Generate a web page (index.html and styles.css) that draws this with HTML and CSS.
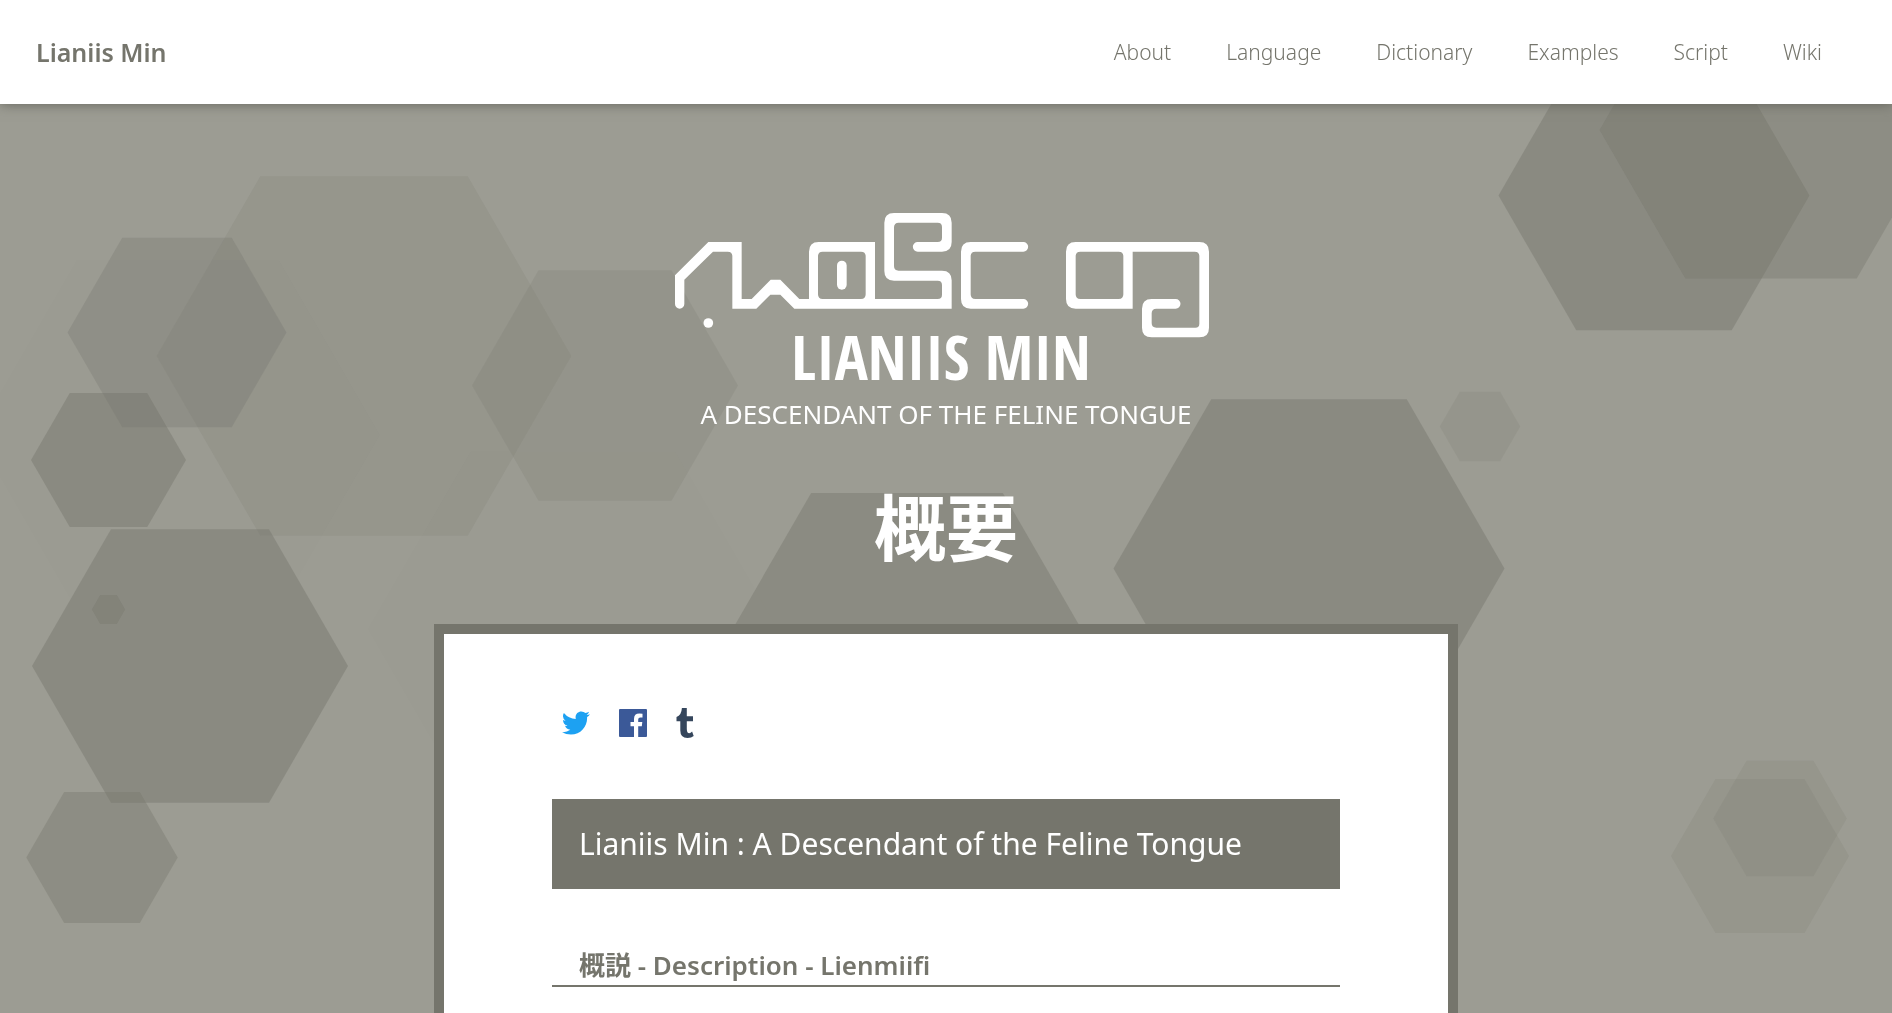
FILE: index.html
```html
<!DOCTYPE html>
<html lang="ja">
<head>
<meta charset="utf-8">
<meta name="viewport" content="width=device-width, initial-scale=1">
<title>Lianiis Min</title>
<link rel="stylesheet" href="styles.css">
</head>
<body>
<svg class="backdrop" viewBox="0 0 1892 1013" preserveAspectRatio="xMidYMin slice" aria-hidden="true">
  <defs><path id="hex" d="M-100 0L-50 -86.6H50L100 0L50 86.6H-50Z"/></defs>
  <use href="#hex" transform="translate(178 435) scale(2.02)" opacity=".015"/>
  <use href="#hex" transform="translate(573 629) scale(2.05)" opacity=".015"/>
  <use href="#hex" transform="translate(364 356) scale(2.075)" opacity=".16"/>
  <use href="#hex" transform="translate(605 385.5) scale(1.33)" opacity=".18"/>
  <use href="#hex" transform="translate(177 332.5) scale(1.095)" opacity=".3"/>
  <use href="#hex" transform="translate(108.5 460) scale(.775)" opacity=".44"/>
  <use href="#hex" transform="translate(190 666) scale(1.58)" opacity=".46"/>
  <use href="#hex" transform="translate(108.5 609.5) scale(.167)" opacity=".38"/>
  <use href="#hex" transform="translate(102 857.5) scale(.757)" opacity=".38"/>
  <use href="#hex" transform="translate(907 659) scale(1.917)" opacity=".42"/>
  <use href="#hex" transform="translate(1309 568.5) scale(1.955)" opacity=".46"/>
  <use href="#hex" transform="translate(1480 426.5) scale(.402)" opacity=".17"/>
  <use href="#hex" transform="translate(1654 195.5) scale(1.555)" opacity=".46"/>
  <use href="#hex" transform="translate(1771 130) scale(1.715)" opacity=".38"/>
  <use href="#hex" transform="translate(1760 856) scale(.89)" opacity=".16"/>
  <use href="#hex" transform="translate(1780 818.5) scale(.668)" opacity=".16"/>
</svg>

<header class="site-header">
  <a class="brand" href="#">Lianiis Min</a>
  <nav class="site-nav">
    <a href="#">About</a>
    <a href="#">Language</a>
    <a href="#">Dictionary</a>
    <a href="#">Examples</a>
    <a href="#">Script</a>
    <a href="#">Wiki</a>
  </nav>
</header>

<main class="page">
  <div class="hero">
    <svg class="logo" viewBox="45 40 1602 510" role="img" aria-label="Lianiis Min">
      <g fill="#fff" fill-rule="evenodd">
        <path d="M45 227L145 127H245V298H275L332 240H361L418 298H447V156q0-29 29-29H645V298H833q13 0 13-13V256q0-13-13-13H702q-29 0-29-29V69q0-29 29-29H846q29 0 29 29V127q0 29-29 29H773a14.5 14.5 0 0 1 0-29H833q13 0 13-13V82q0-13-13-13H716q-14 0-14 14V199q0 14 14 14H846q29 0 29 29V327H403L361 285H331L289 327H217V170q0-14-14-14H159L73 240V313a14 14 0 0 1-28 0ZM488 156q-14 0-14 14V284q0 14 14 14H603q14 0 14-14V170q0-14-14-14Z"/>
        <rect x="531" y="183" width="29" height="87" rx="14.5"/>
        <circle cx="145" cy="370" r="14.5"/>
        <path d="M1090 127H932q-29 0-29 29V298q0 29 29 29H1090a14.5 14.5 0 0 0 0-29H946q-14 0-14-14V170q0-14 14-14H1090a14.5 14.5 0 0 0 0-29Z"/>
        <path d="M1247 127H1618q29 0 29 29V384q0 29-29 29H1475q-29 0-29-29V327q0-29 29-29H1547a14.5 14.5 0 0 1 0 29H1489q-14 0-14 14V370q0 14 14 14H1606q12 0 12-12V170q0-14-14-14H1418V327H1247q-29 0-29-29V156q0-29 29-29ZM1261 156q-14 0-14 14V284q0 14 14 14H1376q14 0 14-14V170q0-14-14-14Z"/>
      </g>
      <text class="logo-name" x="843" y="542" text-anchor="middle">LIANIIS MIN</text>
    </svg>
    <p class="tagline">A DESCENDANT OF THE FELINE TONGUE</p>
    <h1 class="page-title">概要</h1>
  </div>

  <article class="card">
    <div class="share">
      <a href="#" aria-label="Twitter">
        <svg width="28" height="24" viewBox="0 0 28 24" fill="#1da1f2"><path d="M28 3.2q-1.300 1.900-2.900 2.900C25.500 15 19 23.600 8.900 23.600Q4 23.600 0 21.200q4.600.4 8.300-2.400-4.100-.4-5.300-4 1.300.2 2.500-.1-4.400-1.200-4.500-5.700 1.200.7 2.600.7Q-.6 6.500 1.900 2.100q4.700 5.700 11.900 6C12.700 3.500 15.700.4 19.300.4q2.400 0 4.200 1.700 1.900-.4 3.600-1.400-.6 2-2.500 3.200 1.700-.2 3.400-.7Z"/></svg>
      </a>
      <a href="#" aria-label="Facebook">
        <svg width="28" height="28" viewBox="0 0 28 28"><rect width="28" height="28" rx="1" fill="#3b5998"/><path d="M15 28V17.200H11.500V13H15V10Q15 4.600 20.400 4.600L23.500 4.800V8.600H21.300Q19.200 8.600 19.200 10.600V13H23.300L22.800 17.200H19.200V28Z" fill="#fff"/></svg>
      </a>
      <a href="#" aria-label="Tumblr">
        <svg width="18" height="30" viewBox="0 0 18 30" fill="#35465c"><path d="M5.900 0H10.800V8.300H17V13.200H10.800V21Q10.800 25.200 13.300 25.200 14.600 25.200 16.100 23.500L17.700 28Q15.500 30 11.500 30 4.300 30 4.300 22.500V13.200H.5V9.100Q5.500 7.300 5.900 0Z"/></svg>
      </a>
    </div>
    <h2 class="section-title">Lianiis Min : A Descendant of the Feline Tongue</h2>
    <h3 class="sub-title">概説 - Description - Lienmiifi</h3>
  </article>
</main>
</body>
</html>
```

FILE: styles.css
```css
* { box-sizing: border-box; }

body {
  margin: 0;
  min-height: 100vh;
  display: flex;
  flex-direction: column;
  background: #9c9c93;
  color: #75756c;
  font-family: "Noto Sans", "Noto Sans CJK JP", sans-serif;
}

a { color: inherit; text-decoration: none; }

.backdrop {
  position: fixed;
  inset: 0;
  width: 100%;
  height: 100%;
  z-index: -1;
  fill: #75756c;
}

.site-header {
  display: flex;
  align-items: center;
  justify-content: space-between;
  height: 104px;
  padding: 0 70px 0 36px;
  background: #fff;
  box-shadow: 0 0 12px #62625a;
}

.brand { font-size: 25px; font-weight: 600; }

.site-nav {
  display: flex;
  gap: 55px;
  font-size: 21px;
  font-weight: 300;
}

.page {
  flex: 1;
  display: flex;
  flex-direction: column;
  align-items: center;
}

.hero {
  display: flex;
  flex-direction: column;
  align-items: center;
  padding: 109px 16px 0;
  color: #fff;
}

.logo {
  display: block;
  width: 534px;
  max-width: 100%;
  margin-right: 8px;
  overflow: visible;
}

.logo-name {
  fill: #fff;
  font-family: "Open Sans Condensed", "Liberation Sans Narrow", sans-serif;
  font-size: 186px;
}

.tagline { margin: 11px 0 0; font-size: 26px; line-height: 40px; }

.page-title {
  margin: 38px 0 0;
  font-family: "Noto Sans CJK JP", sans-serif;
  font-size: 72px;
  line-height: 104px;
  font-weight: 700;
}

.card {
  flex: 1;
  width: 100%;
  max-width: 1024px;
  margin-top: 48px;
  padding: 72px 108px 24px;
  background: #fff;
  border: solid #75756c;
  border-width: 10px 10px 0;
}

.share {
  display: flex;
  align-items: center;
  gap: 29px;
  height: 34px;
  padding-left: 10px;
}

.share svg { display: block; }

.section-title {
  margin: 59px 0 0;
  padding: 0 27px;
  background: #75756c;
  color: #fff;
  font-size: 30px;
  line-height: 90px;
  font-weight: 400;
}

.sub-title {
  margin: 56px 0 0;
  padding: 0 27px;
  border-bottom: 2px solid #75756c;
  font-size: 26px;
  line-height: 40px;
  font-weight: 600;
}
```
